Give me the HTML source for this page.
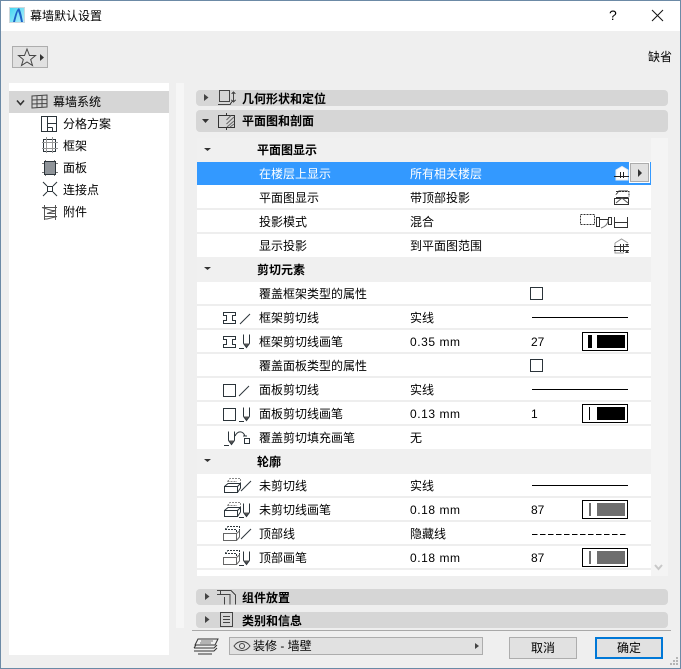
<!DOCTYPE html>
<html><head><meta charset="utf-8"><style>
html,body{margin:0;padding:0;background:#efefef}
#w{position:relative;width:681px;height:669px;overflow:hidden;background:#efefef;font:12px/16px "Liberation Sans","Noto Sans CJK SC",sans-serif;color:#000}
#w div{position:absolute;box-sizing:border-box}
.t{white-space:nowrap;height:16px}
.n{letter-spacing:.55px}
.b{font-weight:bold}
.h{background:#d6d6d6;border-radius:4px;left:196px;width:472px}
.r{left:197px;width:454px;height:24px;background:#fff;border-bottom:2px solid #eee}
.s{left:197px;width:454px;height:25px;background:#f0f0f0}
.sw{left:582px;width:46px;height:19px;border:1px solid #000;background:#fff}
svg{position:absolute;left:0;top:0}
</style></head><body><div id="w">
<div style="left:0;top:0;width:681px;height:31px;background:#fff"></div>
<div class="t" style="left:30px;top:8px">幕墙默认设置</div>
<div class="t" style="left:609px;top:7px;font-size:14px">?</div>
<div class="t" style="left:648px;top:49px">缺省</div>
<div style="left:12px;top:46px;width:36px;height:22px;background:#e1e1e1;border:1px solid #adadad"></div>

<div style="left:9px;top:83px;width:160px;height:572px;background:#fff"></div>
<div style="left:176px;top:83px;width:8px;height:545px;background:#f6f6f6"></div>
<div style="left:9px;top:91px;width:160px;height:22px;background:#d6d6d6"></div>
<div class="t" style="left:53px;top:94px">幕墙系统</div>
<div class="t" style="left:63px;top:116px">分格方案</div>
<div class="t" style="left:63px;top:138px">框架</div>
<div class="t" style="left:63px;top:160px">面板</div>
<div class="t" style="left:63px;top:182px">连接点</div>
<div class="t" style="left:63px;top:204px">附件</div>

<div class="h" style="top:90px;height:16px"></div>
<div class="h" style="top:110px;height:22px"></div>
<div class="h" style="top:589px;height:16px"></div>
<div class="h" style="top:612px;height:16px"></div>
<div class="t b" style="left:242px;top:91px">几何形状和定位</div>
<div class="t b" style="left:242px;top:113px">平面图和剖面</div>
<div class="t b" style="left:242px;top:590px">组件放置</div>
<div class="t b" style="left:242px;top:613px">类别和信息</div>

<div style="left:197px;top:138px;width:454px;height:438px;background:#fff"></div>
<div style="left:651px;top:138px;width:17px;height:438px;background:#f4f4f4"></div>
<div class="s" style="top:138px;height:24px"></div>
<div style="left:197px;top:162px;width:454px;height:23px;background:#3399ff"></div>
<div class="r" style="top:186px"></div>
<div class="r" style="top:210px"></div>
<div class="r" style="top:234px;height:23px;border:0"></div>
<div class="s" style="top:257px"></div>
<div class="r" style="top:282px"></div>
<div class="r" style="top:306px"></div>
<div class="r" style="top:330px"></div>
<div class="r" style="top:354px"></div>
<div class="r" style="top:378px"></div>
<div class="r" style="top:402px"></div>
<div class="r" style="top:426px;height:23px;border:0"></div>
<div class="s" style="top:449px"></div>
<div class="r" style="top:474px"></div>
<div class="r" style="top:498px"></div>
<div class="r" style="top:522px"></div>
<div class="r" style="top:546px"></div>

<div class="t b" style="left:257px;top:142px">平面图显示</div>
<div class="t" style="left:259px;top:166px;color:#fff">在楼层上显示</div>
<div class="t" style="left:410px;top:166px;color:#fff">所有相关楼层</div>
<div class="t" style="left:259px;top:190px">平面图显示</div>
<div class="t" style="left:410px;top:190px">带顶部投影</div>
<div class="t" style="left:259px;top:214px">投影模式</div>
<div class="t" style="left:410px;top:214px">混合</div>
<div class="t" style="left:259px;top:238px">显示投影</div>
<div class="t" style="left:410px;top:238px">到平面图范围</div>
<div class="t b" style="left:257px;top:262px">剪切元素</div>
<div class="t" style="left:259px;top:286px">覆盖框架类型的属性</div>
<div class="t" style="left:259px;top:310px">框架剪切线</div>
<div class="t" style="left:410px;top:310px">实线</div>
<div class="t" style="left:259px;top:334px">框架剪切线画笔</div>
<div class="t n" style="left:410px;top:334px">0.35 mm</div>
<div class="t" style="left:531px;top:334px">27</div>
<div class="t" style="left:259px;top:358px">覆盖面板类型的属性</div>
<div class="t" style="left:259px;top:382px">面板剪切线</div>
<div class="t" style="left:410px;top:382px">实线</div>
<div class="t" style="left:259px;top:406px">面板剪切线画笔</div>
<div class="t n" style="left:410px;top:406px">0.13 mm</div>
<div class="t" style="left:531px;top:406px">1</div>
<div class="t" style="left:259px;top:430px">覆盖剪切填充画笔</div>
<div class="t" style="left:410px;top:430px">无</div>
<div class="t b" style="left:257px;top:454px">轮廓</div>
<div class="t" style="left:259px;top:478px">未剪切线</div>
<div class="t" style="left:410px;top:478px">实线</div>
<div class="t" style="left:259px;top:502px">未剪切线画笔</div>
<div class="t n" style="left:410px;top:502px">0.18 mm</div>
<div class="t" style="left:531px;top:502px">87</div>
<div class="t" style="left:259px;top:526px">顶部线</div>
<div class="t" style="left:410px;top:526px">隐藏线</div>
<div class="t" style="left:259px;top:550px">顶部画笔</div>
<div class="t n" style="left:410px;top:550px">0.18 mm</div>
<div class="t" style="left:531px;top:550px">87</div>

<div class="sw" style="top:332px"><div style="left:5px;top:2px;width:4px;height:13px;background:#000"></div><div style="left:14px;top:2px;width:28px;height:13px;background:#000"></div></div>
<div class="sw" style="top:404px"><div style="left:6px;top:2px;width:1px;height:13px;background:#000"></div><div style="left:14px;top:2px;width:28px;height:13px;background:#000"></div></div>
<div class="sw" style="top:500px"><div style="left:6px;top:2px;width:2px;height:13px;background:#6e6e6e"></div><div style="left:14px;top:2px;width:28px;height:13px;background:#6e6e6e"></div></div>
<div class="sw" style="top:548px"><div style="left:6px;top:2px;width:2px;height:13px;background:#6e6e6e"></div><div style="left:14px;top:2px;width:28px;height:13px;background:#6e6e6e"></div></div>

<div style="left:530px;top:287px;width:13px;height:13px;border:1px solid #2b343a;background:#fff"></div>
<div style="left:530px;top:359px;width:13px;height:13px;border:1px solid #2b343a;background:#fff"></div>
<div style="left:630px;top:163px;width:19px;height:19px;background:#e1e1e1;border:1px solid #adadad;outline:1px solid #fff"></div>

<div style="left:192px;top:630px;width:479px;height:1px;background:#a8a8a8"></div>
<div style="left:229px;top:637px;width:254px;height:18px;background:#e1e1e1;border:1px solid #adadad"></div>
<div class="t" style="left:253px;top:638px">装修 - 墙壁</div>
<div class="t" style="left:509px;top:637px;width:68px;height:22px;background:#e1e1e1;border:1px solid #adadad;text-align:center;line-height:20px">取消</div>
<div class="t" style="left:595px;top:637px;width:68px;height:22px;background:#e1e1e1;border:2px solid #0078d7;text-align:center;line-height:18px">确定</div>

<svg width="681" height="669" viewBox="0 0 681 669" fill="none" stroke="#2b343a" stroke-width="1" shape-rendering="crispEdges">
<defs>
<linearGradient id="g" x1="0" y1="0" x2="1" y2="1"><stop offset="0" stop-color="#3ed6f2"/><stop offset="1" stop-color="#b6eefa"/></linearGradient>
<g id="pen"><path d="M4.500 .5V9.500M10.500 .5V9.500"/><path d="M4.500 9.500L7.500 13.500L10.500 9.500" fill="#555" shape-rendering="auto"/><path d="M0 14.500H5"/></g>
<g id="sl"><path d="M0 11L10 1" shape-rendering="auto"/></g>
<g id="ibeam"><path d="M.5 .5H12.500V3.500H9.500V8.500H12.500V11.500H.5V8.500H3.500V3.500H.5Z"/></g>
<g id="box"><path d="M3.500 3.500L6 .5H16.500V6M3.500 3.500H13" stroke="#888" stroke-dasharray="2 1"/><path d="M.5 8.500H13.500V14.500H.5ZM.5 8.500L4 5.500H16.500V10L13.500 14.500M13.500 8.500L16.500 5.500" shape-rendering="auto"/></g>
<g id="dbox"><path d="M2 3.500L5 .5H16.500V6M2 3.500H13.500V8" stroke-dasharray="2 1"/><path d="M.5 7.500H13.500V14.500H.5ZM13.500 7.500L16.500 5V11L13.500 14.500" stroke="#666" shape-rendering="auto"/></g>
</defs>

<rect x="0.5" y="0.5" width="680" height="668" stroke="#6c8aa6"/>
<rect x="9.500" y="7.500" width="15" height="15" fill="url(#g)" stroke="#cfd8dc"/>
<path d="M13 22C15 15 16 10 19 8C21 11 22 17 23 22H21C20 17 19 13 18 11C17 14 16 18 15 22Z" fill="#1c63c8" stroke="none" shape-rendering="auto"/>
<path d="M652 10L663 21M663 10L652 21" stroke="#111" shape-rendering="auto"/>
<path d="M27 49L29.500 55.500H35.500L30.700 59.500L32.500 65.500L27 62L21.500 65.500L23.300 59.500L18.500 55.500H24.500Z" stroke="#444" shape-rendering="auto"/>
<path d="M40 54L44 57.500L40 61Z" fill="#333" stroke="none" shape-rendering="auto"/>
<path d="M17 100.500L20.500 104.500L24 100.500" stroke="#333" stroke-width="1.600" shape-rendering="auto"/>

<path d="M32 96L47 95V107L32 108ZM37 96V108M42 95.500V107.500M32 100L47 99.500M32 104L47 103.500" stroke="#444" shape-rendering="auto"/>
<path d="M41.500 116.500H56.500V131.500H41.500ZM47.500 116.500V131.500M47.500 123.500H56.500M47.500 127.500H52.500M52.500 127.500V131.500" stroke-width="1"/>
<path d="M43.500 139.500H55.500V151.500H43.500ZM46.500 142.500H52.500V148.500H46.500Z"/><path d="M42 142.500H58M42 148.500H58M46.500 137V153M52.500 137V153" stroke="#999"/>
<path d="M42 163.500H58M42 172.500H58M45.500 160V176M54.500 160V176" stroke="#777"/>
<rect x="44.500" y="161.500" width="11" height="13" fill="#8f9499"/>
<path d="M47.500 186.500H52.500V191.500H47.500ZM47 186L43 182M53 186L57 182M47 192L43 196M53 192L57 196" shape-rendering="auto"/>
<path d="M42 207.500H57M42 207.500L52 210.500H56L47 213.500H55M44 216.500H57L47 219H44M44.500 205V220M55.500 205V220" stroke="#555" shape-rendering="auto"/>

<path d="M204 94L208.500 97.500L204 101Z" fill="#444" stroke="none" shape-rendering="auto"/>
<path d="M205 593L209.500 596.500L205 600Z" fill="#444" stroke="none" shape-rendering="auto"/>
<path d="M205 616L209.500 619.500L205 623Z" fill="#444" stroke="none" shape-rendering="auto"/>
<path d="M202 119L209 119L205.500 123Z" fill="#333" stroke="none" shape-rendering="auto"/>
<path d="M204 148L211 148L207.500 151Z" fill="#333" stroke="none" shape-rendering="auto"/>
<path d="M204 267L211 267L207.500 270Z" fill="#333" stroke="none" shape-rendering="auto"/>
<path d="M204 459L211 459L207.500 462Z" fill="#333" stroke="none" shape-rendering="auto"/>

<path d="M219.500 90.500H229.500V101.500H219.500ZM218 104.500H230L232 101.500M233.500 92V102M231.500 94L233.500 92L235.500 94M231.500 100L233.500 102L235.500 100" stroke="#444"/>
<path d="M218.500 115.500H234.500V127.500H218.500ZM226.500 113V115M226.500 127V130" stroke="#333"/>
<path d="M226.500 120L231 115.500M226.500 124L234 117M227 127L234 121M230 127L234 124" stroke="#666" shape-rendering="auto"/>
<path d="M217 590.500H231L235.500 595V604.500M217 594.500H230V604.500M224.500 597V604.500M220.500 590.500V594.500" stroke="#444"/>
<path d="M220.500 612.500H232.500V626.500H220.500ZM223 616.500H230M223 619.500H230M223 622.500H230" stroke="#444"/>

<use href="#ibeam" x="223" y="312"/><use href="#sl" x="240" y="313"/>
<use href="#ibeam" x="223" y="336"/><use href="#pen" x="239" y="334"/>
<rect x="223.500" y="384.500" width="12" height="12"/><use href="#sl" x="239" y="385"/>
<rect x="223.500" y="408.500" width="12" height="12"/><use href="#pen" x="239" y="407"/>
<use href="#pen" x="224" y="431"/>
<path d="M235 436C238 430 243 431 245 436M243 436H247" shape-rendering="auto"/>
<rect x="244.500" y="438.500" width="5" height="5"/>
<use href="#box" x="224" y="478"/><use href="#sl" x="241" y="480"/>
<use href="#box" x="224" y="502"/><use href="#pen" x="239" y="503"/>
<use href="#dbox" x="223" y="526"/><use href="#sl" x="241" y="528"/>
<use href="#dbox" x="223" y="550"/><use href="#pen" x="239" y="551"/>

<path d="M616 170L622 166.500L628 170V180H616Z" fill="#fff" stroke="#eee" shape-rendering="auto"/>
<path d="M614 176.500H629M620.500 172V178M623.500 172V178" stroke="#222"/>
<path d="M616 194.500L619 191H628M616 197.500H628.500M614.500 198.500H628.500V204.500H614.500Z" stroke="#333"/>
<path d="M616 191.500H629V197" stroke="#333" stroke-dasharray="2 1"/>
<path d="M616 203L622 198L628 203" stroke="#555" shape-rendering="auto"/>
<path d="M580.500 214.500H594.500V224.500H580.500Z" stroke="#333" stroke-dasharray="2 1"/>
<path d="M596.500 217.500H599.500V226.500H596.500ZM608.500 217.500H611.500V224.500H608.500ZM599.500 219.500H608.500" stroke="#333"/>
<path d="M608 220C608 225 604 227 601 228" stroke="#777" shape-rendering="auto"/>
<path d="M614.500 217V227.500H627.500V217M614.500 222.500H627.500" stroke="#333"/>
<path d="M615 243L621.500 239L628 243" stroke="#999" shape-rendering="auto"/>
<path d="M615 243V253H624" stroke="#999"/>
<path d="M614 246.500H629M614 250.500H629M620.500 244V252M623.500 244V252" stroke="#333"/>
<path d="M625 244H629L627 246ZM625 253H629L627 250Z" fill="#333" stroke="none" shape-rendering="auto"/>
<path d="M638 169L642 173L638 177Z" fill="#333" stroke="none" shape-rendering="auto"/>

<path d="M532 317.500H628M532 389.500H628M532 485.500H628" stroke="#000"/>
<path d="M532 534.500H628" stroke="#000" stroke-dasharray="5.500 2.500"/>
<path d="M655 565L658.500 569L662 565" stroke="#c8c8c8" stroke-width="2" shape-rendering="auto"/>

<path d="M198 639H218L215 645H195ZM194 648L196 645M194 648H214L217 645M194 651H214L217 648M198 654H212" stroke="#333" shape-rendering="auto"/>
<path d="M201 641H213M200 643H211" stroke="#777" shape-rendering="auto"/>
<path d="M234 646C238 640 246 640 250 646C246 652 238 652 234 646Z" stroke="#444" shape-rendering="auto"/>
<circle cx="242" cy="646" r="2.500" stroke="#444" shape-rendering="auto"/>
<path d="M475 643L479 646L475 649Z" fill="#444" stroke="none" shape-rendering="auto"/>
<path d="M676 657h2v2h-2zM673 660h2v2h-2zM676 660h2v2h-2zM670 663h2v2h-2zM673 663h2v2h-2zM676 663h2v2h-2z" fill="#b5b5b5" stroke="none"/>
</svg>
</div></body></html>
